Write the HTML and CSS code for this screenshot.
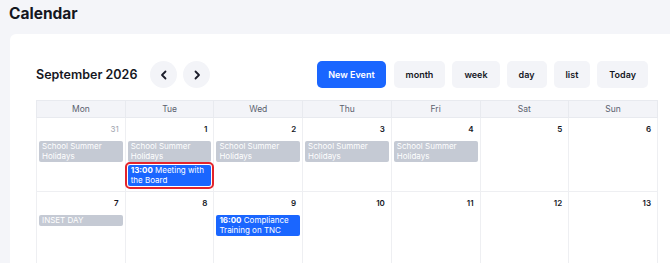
FILE: index.html
```html
<!DOCTYPE html>
<html lang="en">
<head>
    <meta charset="UTF-8">
    <title>Calendar</title>
    <link rel="stylesheet" href="styles.css">
</head>
<body>
    <h1 class="page-title">Calendar</h1>

    <div class="card">
        <div class="toolbar">
            <div class="toolbar-left">
                <h2 class="month-title">September 2026</h2>
                <button class="nav-btn" aria-label="Previous">
                    <svg width="10" height="10" viewBox="0 0 10 10"><path d="M6.5 1.5 L3 5 L6.5 8.5" fill="none" stroke="#1b1d2a" stroke-width="1.8" stroke-linecap="round" stroke-linejoin="round"/></svg>
                </button>
                <button class="nav-btn" aria-label="Next">
                    <svg width="10" height="10" viewBox="0 0 10 10"><path d="M3.5 1.5 L7 5 L3.5 8.5" fill="none" stroke="#1b1d2a" stroke-width="1.8" stroke-linecap="round" stroke-linejoin="round"/></svg>
                </button>
            </div>
            <div class="toolbar-right">
                <button class="btn btn-primary">New Event</button>
                <button class="btn">month</button>
                <button class="btn">week</button>
                <button class="btn">day</button>
                <button class="btn">list</button>
                <button class="btn">Today</button>
            </div>
        </div>

        <table class="month-grid">
            <thead>
                <tr>
                    <th>Mon</th><th>Tue</th><th>Wed</th><th>Thu</th><th>Fri</th><th>Sat</th><th>Sun</th>
                </tr>
            </thead>
            <tbody>
                <tr>
                    <td>
                        <div class="day-num other">31</div>
                        <div class="event holiday">School Summer Holidays</div>
                    </td>
                    <td>
                        <div class="day-num">1</div>
                        <div class="event holiday">School Summer Holidays</div>
                        <div class="event meeting selected"><b>13:00</b> Meeting with the Board</div>
                    </td>
                    <td>
                        <div class="day-num">2</div>
                        <div class="event holiday">School Summer Holidays</div>
                    </td>
                    <td>
                        <div class="day-num">3</div>
                        <div class="event holiday">School Summer Holidays</div>
                    </td>
                    <td>
                        <div class="day-num">4</div>
                        <div class="event holiday">School Summer Holidays</div>
                    </td>
                    <td><div class="day-num">5</div></td>
                    <td><div class="day-num">6</div></td>
                </tr>
                <tr>
                    <td>
                        <div class="day-num">7</div>
                        <div class="event holiday">INSET DAY</div>
                    </td>
                    <td><div class="day-num">8</div></td>
                    <td>
                        <div class="day-num">9</div>
                        <div class="event meeting"><b>16:00</b> Compliance Training on TNC</div>
                    </td>
                    <td><div class="day-num">10</div></td>
                    <td><div class="day-num">11</div></td>
                    <td><div class="day-num">12</div></td>
                    <td><div class="day-num">13</div></td>
                </tr>
            </tbody>
        </table>
    </div>
</body>
</html>
```

FILE: styles.css
```css
body {
    background-color: #f4f5f9;
    font-family: Inter, "Noto Sans", sans-serif;
    color: #15171f;
    margin: 0;
    padding: 0;
    overflow: hidden;
}
.page-title {
    font-size: 15.5px;
    font-weight: 700;
    margin: 0;
    padding: 4px 9px 0;
    height: 30px;
}
.card {
    background-color: white;
    margin-left: 10px;
    width: 690px;
    border-radius: 6px;
    padding: 27px 26px;
    box-sizing: border-box;
    height: 300px;
}
.toolbar {
    display: flex;
    justify-content: space-between;
    align-items: center;
    width: 622px;
    height: 27px;
    margin-bottom: 12px;
}
.toolbar-left {
    display: flex;
    align-items: center;
    gap: 6px;
}
.month-title {
    font-size: 12.5px;
    font-weight: 600;
    margin: 0 7px 0 0;
}
.nav-btn {
    width: 27px;
    height: 27px;
    border-radius: 50%;
    border: none;
    background-color: #f3f4f8;
    display: flex;
    align-items: center;
    justify-content: center;
    padding: 0;
}
.toolbar-right {
    display: flex;
    gap: 7px;
    margin-right: 10px;
}
.btn {
    height: 27px;
    border: none;
    border-radius: 5px;
    background-color: #f3f4f8;
    color: #15171f;
    font-family: inherit;
    font-size: 9px;
    font-weight: 600;
    padding: 0 12px;
}
.btn-primary {
    background-color: #1a66ff;
    color: white;
    padding: 0 11px;
    margin-right: 1px;
}
.month-grid {
    border-collapse: collapse;
    table-layout: fixed;
    width: 622px;
}
.month-grid th {
    background-color: #f3f4f8;
    border: 1px solid #e8eaef;
    height: 16px;
    padding: 0;
    font-size: 8.5px;
    font-weight: 400;
    color: #5a5f6e;
}
.month-grid td {
    border: 1px solid #eeeff2;
    height: 73px;
    vertical-align: top;
    padding: 0 2px;
}
.day-num {
    text-align: right;
    font-size: 8px;
    font-weight: 600;
    padding: 6px 4px 0 0;
    height: 17px;
}
.day-num.other {
    color: #a0a4ae;
    font-weight: 400;
}
.event {
    border-radius: 2px;
    font-size: 8px;
    line-height: 10px;
    padding: 0 3px 1px;
    color: white;
    margin-bottom: 2px;
}
.holiday {
    background-color: #c5cad4;
}
.meeting {
    background-color: #1a66ff;
}
.selected {
    outline: 2px solid #e3242b;
    outline-offset: 1px;
    margin-top: 3px;
}
```
